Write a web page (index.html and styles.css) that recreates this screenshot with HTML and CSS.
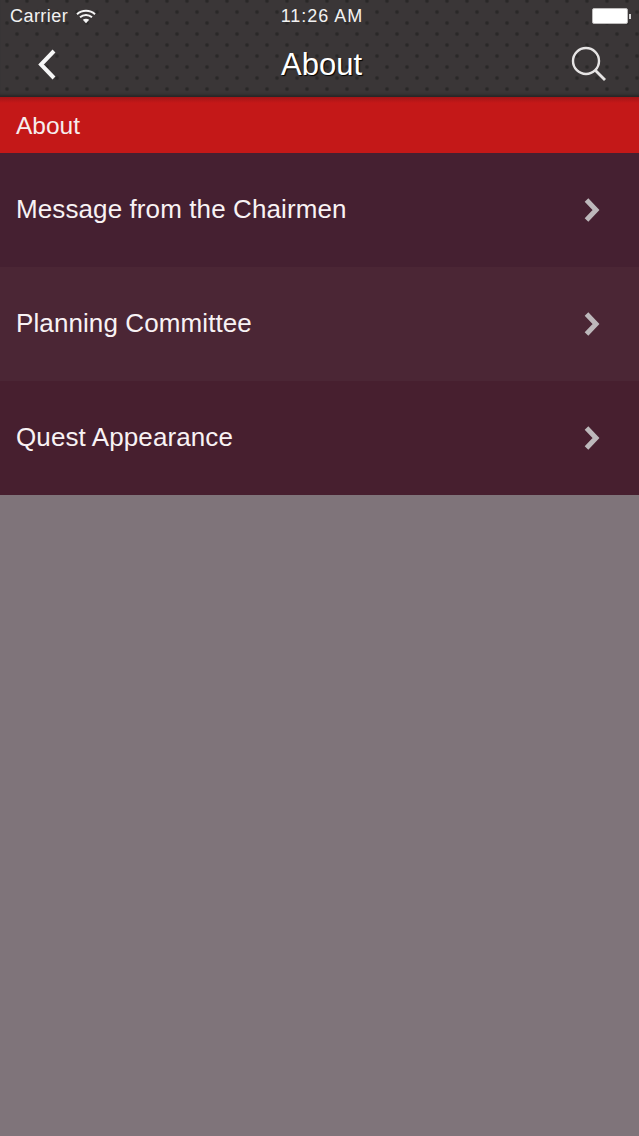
FILE: index.html
```html
<!DOCTYPE html>
<html lang="en">
<head>
  <meta charset="UTF-8">
  <title>About</title>
  <link rel="stylesheet" href="styles.css">
</head>
<body>
  <header class="topbar">
    <div class="status">
      <div class="status-left">
        <span>Carrier</span>
        <svg class="wifi" width="20" height="15" viewBox="0 0 20 15">
          <path d="M1 5.2C6 .6 14 .6 19 5.2" fill="none" stroke="#f4f4f4" stroke-width="2"/>
          <path d="M4 8.2c3.4-3 8.600-3 12 0" fill="none" stroke="#f4f4f4" stroke-width="2"/>
          <path d="M6.800 10.800c1.900-1.500 4.500-1.500 6.400 0L10 14.200z" fill="#f4f4f4"/>
        </svg>
      </div>
      <span class="clock">11:26 AM</span>
      <div class="battery"><i class="battery-fill"></i><i class="battery-tip"></i></div>
    </div>
    <nav class="navbar">
      <svg class="back" width="24" height="34" viewBox="0 0 24 34">
        <path d="M19 4 6 17.500 19 31" fill="none" stroke="#f6f6f6" stroke-width="4"/>
      </svg>
      <h1>About</h1>
      <svg class="search" width="38" height="38" viewBox="0 0 38 38">
        <circle cx="16" cy="16" r="13" fill="none" stroke="#e6e4e4" stroke-width="2.400"/>
        <path d="M25 25 35 35" fill="none" stroke="#e6e4e4" stroke-width="2.800"/>
      </svg>
    </nav>
  </header>

  <div class="section">About</div>

  <ul class="menu">
    <li class="menu-row">
      <span>Message from the Chairmen</span>
      <svg class="chevron" width="18" height="26" viewBox="0 0 18 26"><path d="M3.500 3 13 13 3.500 23" fill="none" stroke="#bdb8bb" stroke-width="5"/></svg>
    </li>
    <li class="menu-row alt">
      <span>Planning Committee</span>
      <svg class="chevron" width="18" height="26" viewBox="0 0 18 26"><path d="M3.500 3 13 13 3.500 23" fill="none" stroke="#bdb8bb" stroke-width="5"/></svg>
    </li>
    <li class="menu-row last">
      <span>Quest Appearance</span>
      <svg class="chevron" width="18" height="26" viewBox="0 0 18 26"><path d="M3.500 3 13 13 3.500 23" fill="none" stroke="#bdb8bb" stroke-width="5"/></svg>
    </li>
  </ul>
</body>
</html>
```

FILE: styles.css
```css
html, body {
  height: 100%;
}
body {
  margin: 0;
  background: #7f747a;
  color: #fff;
  font-family: "Liberation Sans", Arial, sans-serif;
  overflow: hidden;
}
.topbar {
  height: 97px;
  background-color: #3a3637;
  background-image:
    radial-gradient(circle at 50% 50%, #2a2828 0, #2a2828 1px, transparent 2.600px),
    radial-gradient(circle at 50% 50%, #2a2828 0, #2a2828 1px, transparent 2.600px);
  background-size: 20px 22px;
  background-position: 7px 1px, -3px 12px;
  box-shadow: inset 0 -4px 3px -2px #282526;
  position: relative;
}
.status {
  height: 32px;
  display: flex;
  align-items: center;
  justify-content: space-between;
  padding: 0 8px 0 10px;
  font-size: 18px;
  letter-spacing: 0.45px;
  color: #f2f2f2;
  position: relative;
}
.status-left {
  display: flex;
  align-items: center;
  gap: 8px;
}
.clock {
  position: absolute;
  left: 5px;
  right: 0;
  text-align: center;
  letter-spacing: 1px;
}
.battery {
  display: flex;
  align-items: center;
  gap: 1px;
}
.battery-fill {
  display: block;
  width: 34px;
  height: 14px;
  background: #fff;
  border: 1px solid #bdbbbb;
  border-radius: 2px;
}
.battery-tip {
  display: block;
  width: 2px;
  height: 5px;
  background: #d8d8d8;
}
.navbar {
  height: 65px;
  display: grid;
  grid-template-columns: 1fr auto 1fr;
  align-items: center;
  padding: 0 31px 4px 35px;
}
.navbar h1 {
  margin: 0;
  font-size: 31px;
  font-weight: 400;
  text-shadow: 1px 1px 1px #000;
}
.back, .search {
  margin-bottom: 2px;
}
.search {
  justify-self: end;
}
.section {
  height: 56px;
  line-height: 58px;
  padding-left: 16px;
  font-size: 24.500px;
  background: linear-gradient(#a31517, #c41818 6px);
  color: #f6eded;
}
.menu {
  list-style: none;
  margin: 0;
  padding: 0;
}
.menu-row {
  height: 114px;
  display: flex;
  align-items: center;
  justify-content: space-between;
  padding: 0 40px 0 16px;
  font-size: 26px;
  letter-spacing: 0.1px;
  background: #452031;
  color: #f8f2f4;
}
.menu-row span {
  position: relative;
  top: -1px;
}
.menu-row.alt {
  background: #4b2635;
}
.menu-row.last {
  background: #471f2f;
}
.chevron {
  flex: none;
  margin-right: -2px;
}
```
